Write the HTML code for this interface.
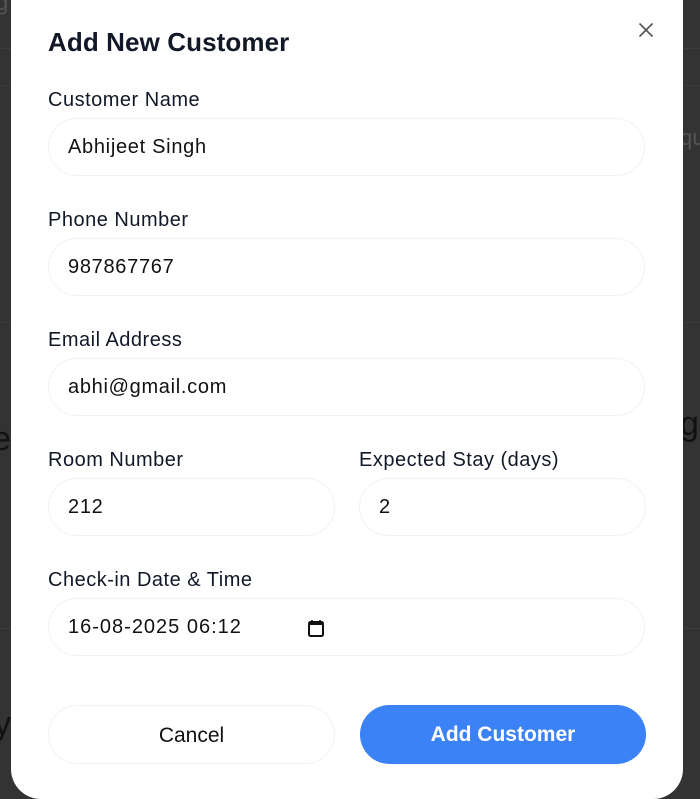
<!DOCTYPE html>
<html><head><style>
*{box-sizing:border-box;margin:0;padding:0}
body{width:700px;height:798px;overflow:hidden;background:#333;font-family:"Liberation Sans",sans-serif;position:relative}
.bg{position:absolute;color:#111;font-size:34px}
.line{position:absolute;left:0;width:700px;height:1px;background:#3d3d3d}
.modal{position:absolute;left:11px;top:-30px;width:672px;height:829px;background:#fff;border-radius:30px}
h1{position:absolute;left:37px;top:57px;font-size:26px;font-weight:bold;color:#111827;letter-spacing:0.1px}
.lab{position:absolute;font-size:20px;color:#111827;letter-spacing:0.5px}
.in{position:absolute;height:58px;border:1px solid #f1f2f4;border-radius:29px;font-size:20px;color:#111;padding-left:19px;line-height:56px;letter-spacing:0.7px}
.x{position:absolute;left:627px;top:52px}
.btn{position:absolute;top:735px;height:59px;border-radius:30px;font-size:21px;font-weight:bold;text-align:center;line-height:59px}
</style></head><body>
<div class="line" style="top:48px"></div><div class="line" style="top:85px"></div>
<div class="line" style="top:322px"></div><div class="line" style="top:628px"></div>
<div class="bg" style="left:-4px;top:-10px;font-size:22px;color:#555">g</div>
<div class="bg" style="left:680px;top:125px;font-size:22px;color:#555">qu</div>
<div class="bg" style="left:-8px;top:420px">e</div>
<div class="bg" style="left:680px;top:405px">g</div>
<div class="bg" style="left:-6px;top:705px">y</div>
<div class="modal">
<h1>Add New Customer</h1>
<svg class="x" width="16" height="16" viewBox="0 0 16 16"><path d="M1.5 1.5L14.5 14.5M14.5 1.5L1.5 14.5" stroke="#555" stroke-width="1.6"/></svg>
<div class="lab" style="left:37px;top:119px">Customer Name</div>
<div class="in" style="left:37px;top:148px;width:597px">Abhijeet Singh</div>
<div class="lab" style="left:37px;top:239px">Phone Number</div>
<div class="in" style="left:37px;top:268px;width:597px">987867767</div>
<div class="lab" style="left:37px;top:359px">Email Address</div>
<div class="in" style="left:37px;top:388px;width:597px">abhi@gmail.com</div>
<div class="lab" style="left:37px;top:479px">Room Number</div>
<div class="in" style="left:37px;top:508px;width:287px">212</div>
<div class="lab" style="left:348px;top:479px">Expected Stay (days)</div>
<div class="in" style="left:348px;top:508px;width:287px">2</div>
<div class="lab" style="left:37px;top:599px">Check-in Date &amp; Time</div>
<div class="in" style="left:37px;top:628px;width:597px;letter-spacing:1px">16-08-2025 06:12
<svg style="position:absolute;left:258px;top:20px" width="18" height="18" viewBox="0 0 18 18"><rect x="2" y="3" width="14" height="14" rx="1.5" fill="none" stroke="#111" stroke-width="2"/><rect x="2" y="3" width="14" height="3" fill="#111"/><path d="M5 1v3M13 1v3" stroke="#111" stroke-width="1.6"/></svg></div>
<div class="btn" style="left:37px;width:287px;border:1px solid #f1f2f4;color:#111;font-weight:normal">Cancel</div>
<div class="btn" style="left:349px;width:286px;background:#3b82f6;color:#fff">Add Customer</div>
</div>
</body></html>
